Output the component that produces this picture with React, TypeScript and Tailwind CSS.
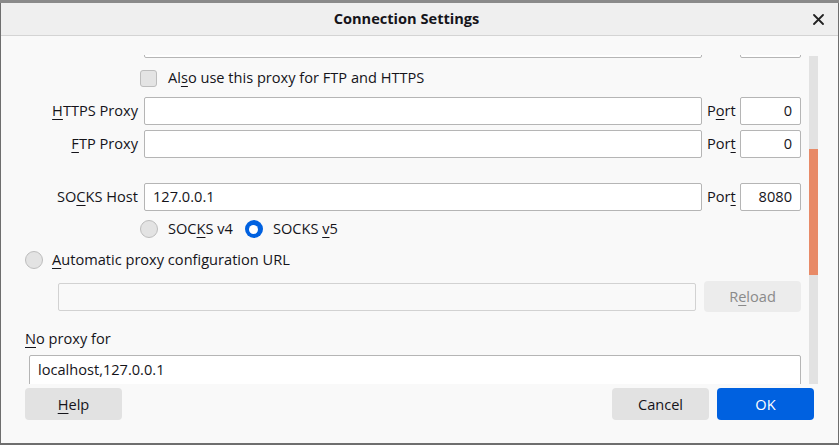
import React from "react";

const U = ({ children }: { children: React.ReactNode }) => (
  <span className="underline underline-offset-[3px] decoration-[1px]">{children}</span>
);

function TextBox({ value, className = "" }: { value?: string; className?: string }) {
  return (
    <div
      className={
        "h-[28px] bg-white border border-[#b5b5b5] rounded-[2px] flex items-center px-[8px] text-[#15141a] " +
        className
      }
    >
      {value}
    </div>
  );
}

function ProxyRow({
  label,
  value,
  port,
  portLabel,
}: {
  label: React.ReactNode;
  value?: string;
  port: string;
  portLabel: React.ReactNode;
}) {
  return (
    <div className="flex items-center h-[28px]">
      <div className="w-[114px] text-right pr-[1px]">{label}</div>
      <TextBox value={value} className="ml-[5px] w-[558px]" />
      <div className="ml-[5px] w-[33px]">{portLabel}</div>
      <TextBox value={port} className="w-[61px] justify-end" />
    </div>
  );
}

function Radio({ checked }: { checked?: boolean }) {
  return checked ? (
    <div className="w-[18px] h-[18px] rounded-full bg-[#0061e0] flex items-center justify-center">
      <div className="w-[9px] h-[9px] rounded-full bg-white" />
    </div>
  ) : (
    <div className="w-[18px] h-[18px] rounded-full bg-[#e3e3e3] border border-[#bdbdbd]" />
  );
}

export default function App() {
  return (
    <div
      className="w-[839px] h-[445px] flex flex-col bg-[#6e6e6e] text-[14.6px] text-[#15141a] overflow-hidden"
      style={{ fontFamily: '"Open Sans", "Noto Sans", sans-serif' }}
    >
      <div className="h-[3px] bg-[#8a8a8a]" />
      <div className="flex-1 flex flex-col mx-[1px] mb-[2px] bg-[#f9f9f9] min-h-0">
        {/* title bar */}
        <div className="h-[33px] shrink-0 bg-[#efefef] border-b border-[#d4d4d4] flex items-center justify-center relative">
          <span className="font-bold text-[14.6px] mr-[26px]">Connection Settings</span>
          <svg
            className="absolute right-[14px] top-[11px]"
            width="11"
            height="11"
            viewBox="0 0 11 11"
          >
            <path d="M1 1 L10 10 M10 1 L1 10" stroke="#222" strokeWidth="1.8" strokeLinecap="round" />
          </svg>
        </div>

        {/* body */}
        <div className="flex h-[348px] shrink-0 pt-[19px]">
          <div className="w-[804px] h-full overflow-hidden pl-[24px]">
            <div className="h-[3px] overflow-hidden flex items-end">
              <div className="flex shrink-0">
                <div className="w-[114px]" />
                <div className="ml-[5px] w-[558px] h-[28px] border border-[#b5b5b5] rounded-[2px] bg-white" />
                <div className="ml-[5px] w-[33px]" />
                <div className="w-[61px] h-[28px] border border-[#b5b5b5] rounded-[2px] bg-white" />
              </div>
            </div>

            <div className="flex items-center h-[18px] mt-[11px] ml-[115px]">
              <div className="w-[17px] h-[17px] rounded-[3px] bg-[#e4e4e4] border border-[#bdbdbd]" />
              <span className="ml-[11px]">
                Al<U>s</U>o use this proxy for FTP and HTTPS
              </span>
            </div>

            <div className="mt-[10px] flex flex-col gap-[5px]">
              <ProxyRow
                label={
                  <>
                    <U>H</U>TTPS Proxy
                  </>
                }
                port="0"
                portLabel={
                  <>
                    P<U>o</U>rt
                  </>
                }
              />
              <ProxyRow
                label={
                  <>
                    <U>F</U>TP Proxy
                  </>
                }
                port="0"
                portLabel={
                  <>
                    Por<U>t</U>
                  </>
                }
              />
            </div>

            <div className="mt-[25px]">
              <ProxyRow
                label={
                  <>
                    SO<U>C</U>KS Host
                  </>
                }
                value="127.0.0.1"
                port="8080"
                portLabel={
                  <>
                    Por<U>t</U>
                  </>
                }
              />
            </div>

            <div className="flex items-center h-[20px] mt-[8px] ml-[115px]">
              <Radio />
              <span className="ml-[10px]">
                SOC<U>K</U>S v4
              </span>
              <div className="ml-[12px]">
                <Radio checked />
              </div>
              <span className="ml-[10px]">
                SOCKS <U>v</U>5
              </span>
            </div>

            <div className="flex items-center h-[20px] mt-[11px]">
              <Radio />
              <span className="ml-[9px]">
                <U>A</U>utomatic proxy configuration URL
              </span>
            </div>

            <div className="flex items-center mt-[11px] ml-[33px]">
              <div className="w-[638px] h-[28px] border border-[#d2d2d2] rounded-[2px] bg-[#f9f9f9]" />
              <div className="ml-[8px] w-[97px] h-[31px] rounded-[4px] bg-[#ececec] text-[#8a8a8a] flex items-center justify-center">
                R<U>e</U>load
              </div>
            </div>

            <div className="mt-[17px] h-[20px] flex items-center">
              <U>N</U>o proxy for
            </div>

            <div className="mt-[6px] ml-[4px] w-[772px] h-[40px] border border-[#b5b5b5] rounded-[2px] bg-white px-[8px] pt-[3px]">
              localhost,127.0.0.1
            </div>
          </div>

          {/* scrollbar */}
          <div className="ml-[4px] w-[9px] h-full pt-[1px]">
            <div className="h-full bg-[#e2e2e2] flex flex-col">
              <div className="h-[93px] shrink-0" />
              <div className="h-[126px] shrink-0 bg-[#e88a67]" />
            </div>
          </div>
        </div>

        {/* footer */}
        <div className="flex-1 flex items-start pt-[4px] px-[24px]">
          <button className="w-[97px] h-[32px] rounded-[4px] bg-[#e2e2e2] pt-[2px]">
            <U>H</U>elp
          </button>
          <div className="flex-1" />
          <button className="w-[97px] h-[32px] rounded-[4px] bg-[#e2e2e2] pt-[2px]">Cancel</button>
          <button className="ml-[8px] w-[97px] h-[32px] rounded-[4px] bg-[#0061e0] text-white pt-[2px]">
            OK
          </button>
        </div>
      </div>
    </div>
  );
}
